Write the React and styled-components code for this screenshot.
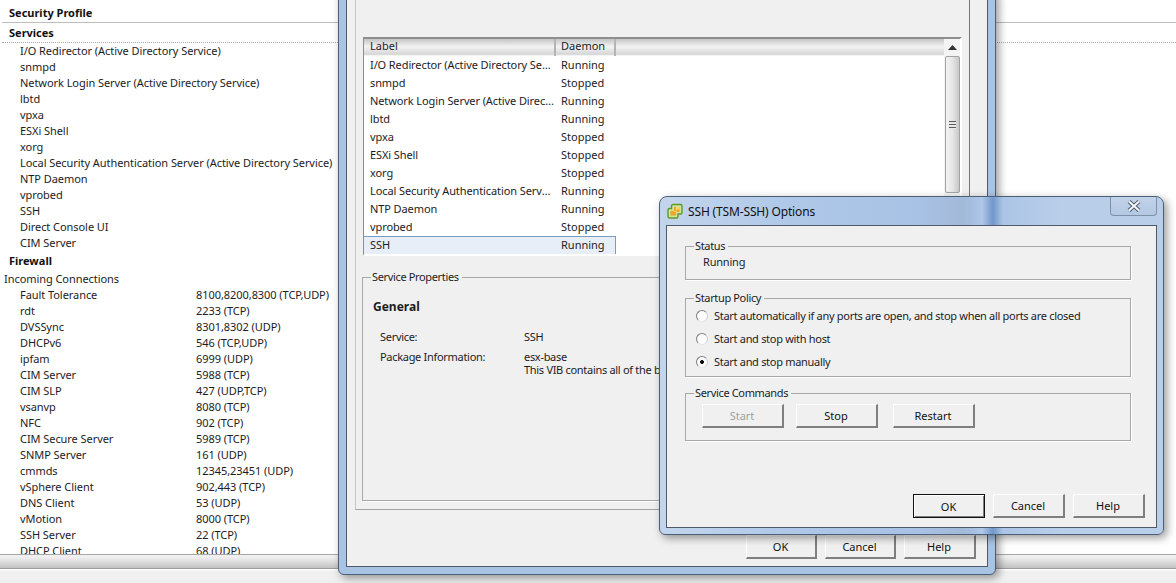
import React from "react";
import styled, { createGlobalStyle } from "styled-components";

const Global = createGlobalStyle`
  html, body { margin: 0; padding: 0; width: 1176px; height: 583px; overflow: hidden; background: #f0f0f0; }
  * { box-sizing: border-box; }
  body { font-family: "Noto Sans", "DejaVu Sans", sans-serif; font-size: 11px; color: #1c1c24; }
`;

const Desktop = styled.div`
  position: relative;
  width: 1176px;
  height: 583px;
  overflow: hidden;
  background: #fff;
  display: flex;
  flex-direction: column;
`;

const SummaryPane = styled.div`
  flex: none;
  height: 554px;
  overflow: hidden;
  background: #fff;
  padding: 4px 0 0 2px;
  letter-spacing: -0.06px;
`;

const PaneTitle = styled.div`
  font-weight: 700;
  height: 19px;
  line-height: 18px;
  padding-left: 7px;
  border-bottom: 1px solid #bdbdbd;
  color: #111;
  letter-spacing: 0;
`;

const SectionTitle = styled.div`
  font-weight: 700;
  height: 20px;
  line-height: 20px;
  padding-left: 7px;
  border-bottom: ${(p) => (p.$dotted ? "1px dotted #aaa" : "none")};
  color: #111;
  letter-spacing: 0;
`;

const ServiceRow = styled.div`
  height: 16px;
  line-height: 16px;
  padding-left: 18px;
  white-space: nowrap;
`;

const SubTitle = styled.div`
  height: 16px;
  line-height: 16px;
  padding-left: 2px;
`;

const PortRow = styled.div`
  display: grid;
  grid-template-columns: 176px auto;
  height: 16px;
  line-height: 16px;
  padding-left: 18px;
  white-space: nowrap;
`;

const StatusBar = styled.div`
  flex: none;
  height: 29px;
  border-top: 1px solid #a8a8a8;
  background: linear-gradient(#f0f0f0 0 2px, #e0e0e0 6px, #c2c2c2 13px, #9e9e9e 13px 14px, #fff 14px 15px, #f0f0f0 16px);
`;

const AeroWindow = styled.div`
  position: absolute;
  left: ${(p) => p.$x}px;
  top: ${(p) => p.$y}px;
  width: ${(p) => p.$w}px;
  height: ${(p) => p.$h}px;
  border-radius: 0 0 6px 6px;
  background: #a9c3e4;
  border: 1px solid #4c5f78;
  box-shadow: 3px 3px 9px rgba(0, 0, 0, 0.4);
  display: flex;
  flex-direction: column;
  padding: 0 7px 7px;
`;

const ToolWindow = styled(AeroWindow)`
  border-radius: 8px 8px 6px 6px;
  padding: 0 6px 6px;
  background: linear-gradient(90deg, #c3d5ec 0, #afc8e8 130px, #a8c2e5 260px, #a3b9d8 303px, #a6bedf 312px, #b0c8e8 322px, #7297c9 333px, #acc5e6 343px, #b9cee9 400px);
`;

const TitleBar = styled.div`
  flex: none;
  height: 28px;
  display: flex;
  align-items: center;
  gap: 5px;
  font-size: 12px;
  letter-spacing: -0.15px;
  color: #111;
  padding-left: 1px;
  position: relative;
`;

const CloseBox = styled.div`
  position: absolute;
  right: 0;
  top: 0;
  width: 47px;
  height: 19px;
  border: 1px solid #7f8fa6;
  border-top: none;
  border-radius: 0 0 4px 4px;
  background: linear-gradient(#c2d3e9, #b3c8e4);
  display: flex;
  align-items: center;
  justify-content: center;
`;

const Client = styled.div`
  flex: 1;
  min-height: 0;
  background: #f0f0f0;
  border: 1px solid #50596a;
  position: relative;
  display: flex;
  flex-direction: column;
`;

const MainClient = styled(Client)`
  border-top: none;
  padding: 0 17px 0 8px;
`;

const InnerPanel = styled.div`
  flex: none;
  height: 519px;
  padding: 46px 7px 0;
  border: 1px solid;
  border-color: #c6c6c6 #767676 #a2a2a2 #c6c6c6;
  border-top: none;
  display: flex;
  flex-direction: column;
`;

const ListBox = styled.div`
  flex: none;
  height: 219px;
  background: #fff;
  border-style: solid;
  border-width: 2px 2px 2px 1px;
  border-color: #8e8e8e #fff #fff #8e8e8e;
  display: flex;
`;

const ListBody = styled.div`
  flex: 1;
  min-width: 0;
`;

const HeaderRow = styled.div`
  display: flex;
  height: 17px;
  background: linear-gradient(#c4c4c4 0, #f3f3f3 45%, #d6d6d6 90%, #fff 100%);
`;

const HeaderCell = styled.div`
  width: ${(p) => p.$w}px;
  padding-left: ${(p) => p.$pl}px;
  line-height: 13px;
  border-right: 2px solid #b4b4b4;
`;

const ListRow = styled.div`
  display: grid;
  grid-template-columns: 191px 60px;
  width: 252px;
  height: 18px;
  line-height: 18px;
  white-space: nowrap;
  padding-left: 6px;
  background: ${(p) => (p.$selected ? "#e8eef7" : "transparent")};
  box-shadow: ${(p) => (p.$selected ? "inset 0 1px #7a9cc2, inset -1px 0 #7a9cc2" : "none")};
`;

const CellClip = styled.div`
  overflow: hidden;
  text-overflow: ellipsis;
  padding-right: 6px;
  letter-spacing: -0.1px;
`;

const ScrollTrack = styled.div`
  flex: none;
  width: 16px;
  background: #f4f4f4;
  display: flex;
  flex-direction: column;
  align-items: flex-end;
`;

const ScrollArrow = styled.div`
  width: 15px;
  height: 17px;
  display: flex;
  align-items: center;
  justify-content: center;
`;

const ScrollThumb = styled.div`
  width: 15px;
  height: 137px;
  border: 1px solid #a2a2a2;
  border-radius: 2px;
  background: linear-gradient(90deg, #f3f3f3, #e6e6e6 50%, #c8c8c8);
  display: flex;
  align-items: center;
  justify-content: center;
`;

const Grip = styled.div`
  width: 7px;
  height: 8px;
  background: repeating-linear-gradient(#5c5c5c 0 1px, #e8e8e8 1px 3px);
`;

const Group = styled.fieldset`
  margin: 0;
  padding: 0;
  min-width: 0;
  border: none;
  border-top: 1px solid #a8a8a8;
  box-shadow: inset 1px 0 #a8a8a8, inset 0 -1px #a8a8a8, inset -1px 0 #a8a8a8, 1px 1px #fff;
  position: relative;
`;

const GroupLabel = styled.span`
  position: absolute;
  top: -9px;
  left: ${(p) => p.$left || 9}px;
  padding: 0 3px 0 1px;
  background: #f0f0f0;
  line-height: 16px;
  white-space: nowrap;
  letter-spacing: -0.35px;
`;

const PropsGroup = styled(Group)`
  flex: none;
  margin: 21px 0 0 -1px;
  height: 224px;
  padding: 21px 0 0 11px;
`;

const PropsHeading = styled.div`
  font-weight: 700;
  font-size: 12px;
  line-height: 16px;
  margin-bottom: 15px;
`;

const PropsGrid = styled.div`
  display: grid;
  grid-template-columns: 144px 1fr;
  padding-left: 7px;
  line-height: 13px;
  row-gap: 7px;
  white-space: nowrap;
  letter-spacing: -0.3px;
`;

const ButtonRow = styled.div`
  display: flex;
  justify-content: flex-end;
  gap: 8px;
`;

const MainButtons = styled(ButtonRow)`
  margin-top: auto;
  margin-bottom: 7px;
  margin-right: -6px;
`;

const Btn = styled.button`
  font: inherit;
  width: ${(p) => p.$w || 72}px;
  height: 24px;
  padding: 0 1px 0 0;
  color: ${(p) => (p.disabled ? "#a0a0a0" : "#111")};
  background: #f0f0f0;
  border-style: solid;
  border-width: ${(p) => (p.$default ? "1px" : "1px 2px 2px 1px")};
  border-color: ${(p) => (p.$default ? "#111" : "#fff #7f7f7f #7f7f7f #fff")};
  box-shadow: ${(p) => (p.$default ? "inset 1px 1px #fff, inset -1px -1px #7f7f7f" : "none")};
`;

const OptionsBody = styled(Client)`
  padding: 20px 25px 0 18px;
`;

const StatusGroup = styled(Group)`
  flex: none;
  height: 34px;
  margin-bottom: 18px;
  padding: 7px 0 0 18px;
  line-height: 16px;
  letter-spacing: -0.2px;
`;

const PolicyGroup = styled(Group)`
  flex: none;
  height: 79px;
  margin-bottom: 16px;
  padding-top: 5px;
`;

const RadioRow = styled.label`
  display: flex;
  align-items: center;
  gap: 6px;
  height: 23px;
  padding-left: 11px;
  white-space: nowrap;
  letter-spacing: -0.3px;
`;

const RadioDot = styled.span`
  flex: none;
  width: 12px;
  height: 12px;
  border-radius: 50%;
  background: ${(p) =>
    p.$on
      ? "radial-gradient(circle, #111 0 1.7px, #fdfdfd 2.2px 100%)"
      : "#fdfdfd"};
  border: 1px solid;
  border-color: #7e7e7e #cfcfcf #e6e6e6 #7e7e7e;
`;

const CommandGroup = styled(Group)`
  flex: none;
  height: 48px;
`;

const CommandButtons = styled.div`
  display: flex;
  padding: 10px 0 0 17px;
`;

const CommandBtn = styled(Btn)`
  width: 82px;
  margin-right: ${(p) => p.$mr}px;
`;

const OptionsFooter = styled(ButtonRow)`
  margin-top: auto;
  margin-bottom: 9px;
  margin-right: -14px;
`;

const services = ["I/O Redirector (Active Directory Service)", "snmpd", "Network Login Server (Active Directory Service)", "lbtd", "vpxa", "ESXi Shell", "xorg", "Local Security Authentication Server (Active Directory Service)", "NTP Daemon", "vprobed", "SSH", "Direct Console UI", "CIM Server"];

const ports = [
  ["Fault Tolerance", "8100,8200,8300 (TCP,UDP)"], ["rdt", "2233 (TCP)"], ["DVSSync", "8301,8302 (UDP)"],
  ["DHCPv6", "546 (TCP,UDP)"], ["ipfam", "6999 (UDP)"], ["CIM Server", "5988 (TCP)"], ["CIM SLP", "427 (UDP,TCP)"],
  ["vsanvp", "8080 (TCP)"], ["NFC", "902 (TCP)"], ["CIM Secure Server", "5989 (TCP)"], ["SNMP Server", "161 (UDP)"],
  ["cmmds", "12345,23451 (UDP)"], ["vSphere Client", "902,443 (TCP)"], ["DNS Client", "53 (UDP)"], ["vMotion", "8000 (TCP)"],
  ["SSH Server", "22 (TCP)"], ["DHCP Client", "68 (UDP)"],
];

const daemons = [
  ["I/O Redirector (Active Directory Service)", "Running"], ["snmpd", "Stopped"],
  ["Network Login Server (Active Directory Service)", "Running"], ["lbtd", "Running"], ["vpxa", "Stopped"],
  ["ESXi Shell", "Stopped"], ["xorg", "Stopped"], ["Local Security Authentication Server (Active Directory Service)", "Running"],
  ["NTP Daemon", "Running"], ["vprobed", "Stopped"], ["SSH", "Running"],
];

const Logo = () => (
  <svg width="16" height="16" viewBox="0 0 16 16">
    <path d="M6 1.5h7.5a1.5 1.5 0 0 1 1.5 1.5v6.5a1.5 1.5 0 0 1-1.5 1.5H11v2.5A1.5 1.5 0 0 1 9.500 15H2.500A1.500 1.500 0 0 1 1 13.500V7a1.500 1.500 0 0 1 1.500-1.500H4.500V3A1.500 1.500 0 0 1 6 1.500z" fill="#cfe39a" stroke="#5f9a26" strokeWidth="1.4" />
    <path d="M7 4h5.500v5H9v3.500H3.500V8H7z" fill="#f0a424" />
    <path d="M7 8h2V4h3.500v2.500H9.500V9H7z" fill="#f9d779" />
  </svg>
);

const CloseGlyph = () => (
  <svg width="14" height="12" viewBox="0 0 14 12">
    <path d="M2 1.500 12 10.500M12 1.500 2 10.500" stroke="#4c5767" strokeWidth="4" />
    <path d="M2 1.500 12 10.500M12 1.500 2 10.500" stroke="#f1f4f8" strokeWidth="2.200" />
  </svg>
);

export default function App() {
  return (
    <Desktop>
      <Global />
      <SummaryPane>
        <PaneTitle>Security Profile</PaneTitle>
        <SectionTitle $dotted>Services</SectionTitle>
        {services.map((s) => <ServiceRow key={s}>{s}</ServiceRow>)}
        <SectionTitle>Firewall</SectionTitle>
        <SubTitle>Incoming Connections</SubTitle>
        {ports.map(([a, b]) => <PortRow key={a + b}><span>{a}</span><span>{b}</span></PortRow>)}
      </SummaryPane>
      <StatusBar />

      <AeroWindow $x={338} $y={-10} $w={658} $h={585}>
        <MainClient>
          <InnerPanel>
            <ListBox>
              <ListBody>
                <HeaderRow>
                  <HeaderCell $w={192} $pl={6}>Label</HeaderCell>
                  <HeaderCell $w={60} $pl={5}>Daemon</HeaderCell>
                </HeaderRow>
                {daemons.map(([a, b]) => (
                  <ListRow key={a} $selected={a === "SSH"}>
                    <CellClip>{a}</CellClip><span>{b}</span>
                  </ListRow>
                ))}
              </ListBody>
              <ScrollTrack>
                <ScrollArrow><svg width="9" height="5" viewBox="0 0 9 5"><path d="M4.500 0 9 5H0z" fill="#333" /></svg></ScrollArrow>
                <ScrollThumb><Grip /></ScrollThumb>
              </ScrollTrack>
            </ListBox>
            <PropsGroup>
              <GroupLabel>Service Properties</GroupLabel>
              <PropsHeading>General</PropsHeading>
              <PropsGrid>
                <span>Service:</span><span>SSH</span>
                <span>Package Information:</span>
                <span>esx-base<br />This VIB contains all of the base functionality</span>
              </PropsGrid>
            </PropsGroup>
          </InnerPanel>
          <MainButtons>
            <Btn $w={71}>OK</Btn><Btn $w={71}>Cancel</Btn><Btn $w={72}>Help</Btn>
          </MainButtons>
        </MainClient>
      </AeroWindow>

      <ToolWindow $x={659} $y={196} $w={505} $h={339}>
        <TitleBar>
          <Logo />SSH (TSM-SSH) Options
          <CloseBox><CloseGlyph /></CloseBox>
        </TitleBar>
        <OptionsBody>
          <StatusGroup>
            <GroupLabel>Status</GroupLabel>
            Running
          </StatusGroup>
          <PolicyGroup>
            <GroupLabel>Startup Policy</GroupLabel>
            <RadioRow><RadioDot />Start automatically if any ports are open, and stop when all ports are closed</RadioRow>
            <RadioRow><RadioDot />Start and stop with host</RadioRow>
            <RadioRow><RadioDot $on />Start and stop manually</RadioRow>
          </PolicyGroup>
          <CommandGroup>
            <GroupLabel>Service Commands</GroupLabel>
            <CommandButtons>
              <CommandBtn disabled $mr={12}>Start</CommandBtn>
              <CommandBtn $mr={15}>Stop</CommandBtn>
              <CommandBtn $mr={0}>Restart</CommandBtn>
            </CommandButtons>
          </CommandGroup>
          <OptionsFooter>
            <Btn $default>OK</Btn><Btn>Cancel</Btn><Btn>Help</Btn>
          </OptionsFooter>
        </OptionsBody>
      </ToolWindow>
    </Desktop>
  );
}
